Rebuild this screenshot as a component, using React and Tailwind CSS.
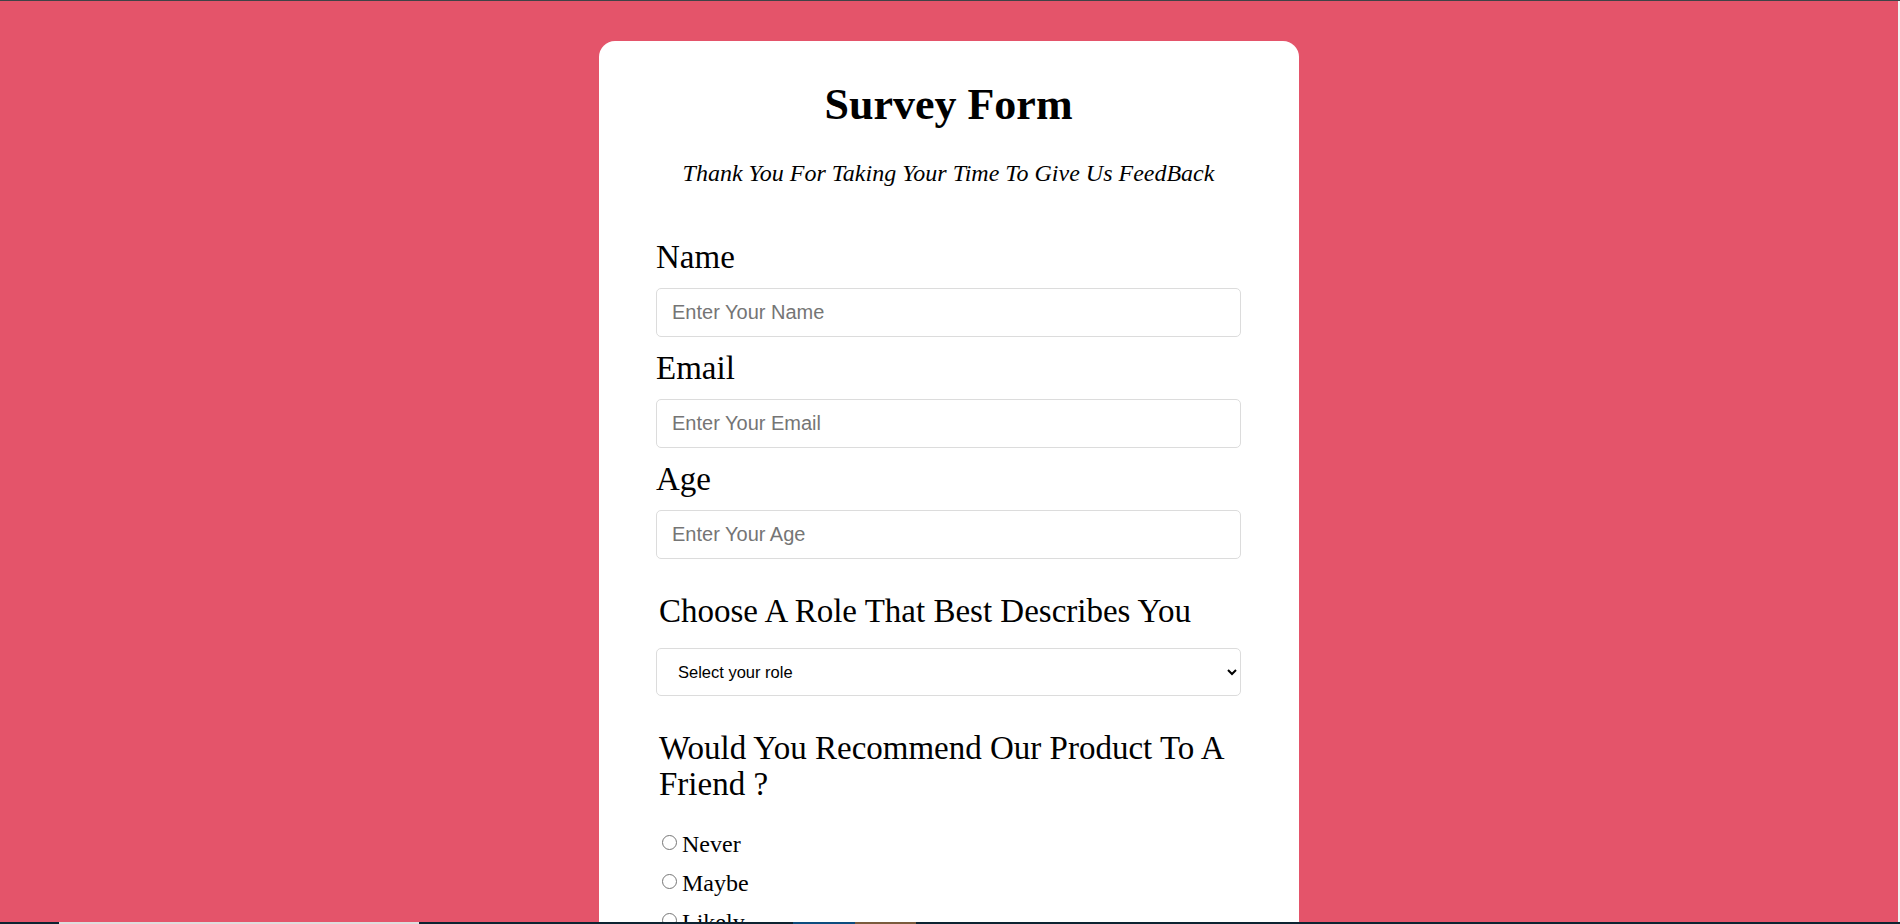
export default function App() {
  const serif = { fontFamily: '"Liberation Serif", "Times New Roman", serif' };
  const inputCls =
    "block w-full h-[49px] border border-[#dcdcdc] rounded-[5px] bg-white px-[15px] text-[20px] text-black placeholder:text-[#757575] outline-none";
  const sans = { fontFamily: '"Liberation Sans", Arial, sans-serif' };
  return (
    <div className="h-screen w-full flex flex-col overflow-hidden bg-[#e4546a]" style={serif}>
      <div className="h-px shrink-0 bg-[#3f4347]" />
      <div className="flex flex-1 min-h-0">
        <main className="flex-1 min-w-0 overflow-hidden flex justify-center">
          <div className="w-[700px] shrink-0 mt-10 bg-white rounded-t-2xl pl-[57px] pr-[58px] pt-[38px] text-black">
            <h1 className="text-center font-bold text-[44px] leading-[52px]">Survey Form</h1>
            <p className="text-center italic text-[24px] leading-[28px] mt-[28px]">
              Thank You For Taking Your Time To Give Us FeedBack
            </p>
            <form className="mt-[52px]">
              <label className="block text-[33px] leading-[37px] mb-3">Name</label>
              <input className={inputCls} style={sans} placeholder="Enter Your Name" />
              <label className="block text-[33px] leading-[37px] mt-[13px] mb-3">Email</label>
              <input className={inputCls} style={sans} placeholder="Enter Your Email" />
              <label className="block text-[33px] leading-[37px] mt-[13px] mb-3">Age</label>
              <input className={inputCls} style={sans} placeholder="Enter Your Age" />

              <div className="pl-[3px] mt-[34px] text-[33px] leading-[37px]">
                Choose A Role That Best Describes You
              </div>
              <select
                className="block w-full h-[48px] mt-[18px] border border-[#dcdcdc] rounded-[5px] bg-white pl-[17px] pr-[12px] text-[16.5px] text-black outline-none"
                style={sans}
                defaultValue=""
              >
                <option value="">Select your role</option>
                <option>Student</option>
                <option>Full Time Job</option>
                <option>Full Time Learner</option>
                <option>Other</option>
              </select>

              <div className="pl-[3px] mt-[34px] text-[33px] leading-[36px] pr-4">
                Would You Recommend Our Product To A Friend ?
              </div>
              <div className="mt-[28px] pl-[6px] flex flex-col gap-[11px]">
                {["Never", "Maybe", "Likely"].map((t) => (
                  <label key={t} className="flex items-center text-[24px] leading-[28px]">
                    <input
                      type="radio"
                      name="rec"
                      className="w-[15px] h-[15px] m-0 mr-[5px] translate-y-[-2px]"
                    />
                    {t}
                  </label>
                ))}
              </div>
            </form>
          </div>
        </main>
        <div className="w-[2px] shrink-0 bg-[#f1f1f1]" />
      </div>
      <div className="h-[2px] shrink-0 flex bg-[#0d2331]">
        <div className="ml-[59px] w-[360px] bg-[#dedede]" />
        <div className="ml-[374px] w-[62px] bg-[#0d4c7e]" />
        <div className="w-[61px] bg-[#7b5b3d]" />
      </div>
    </div>
  );
}
